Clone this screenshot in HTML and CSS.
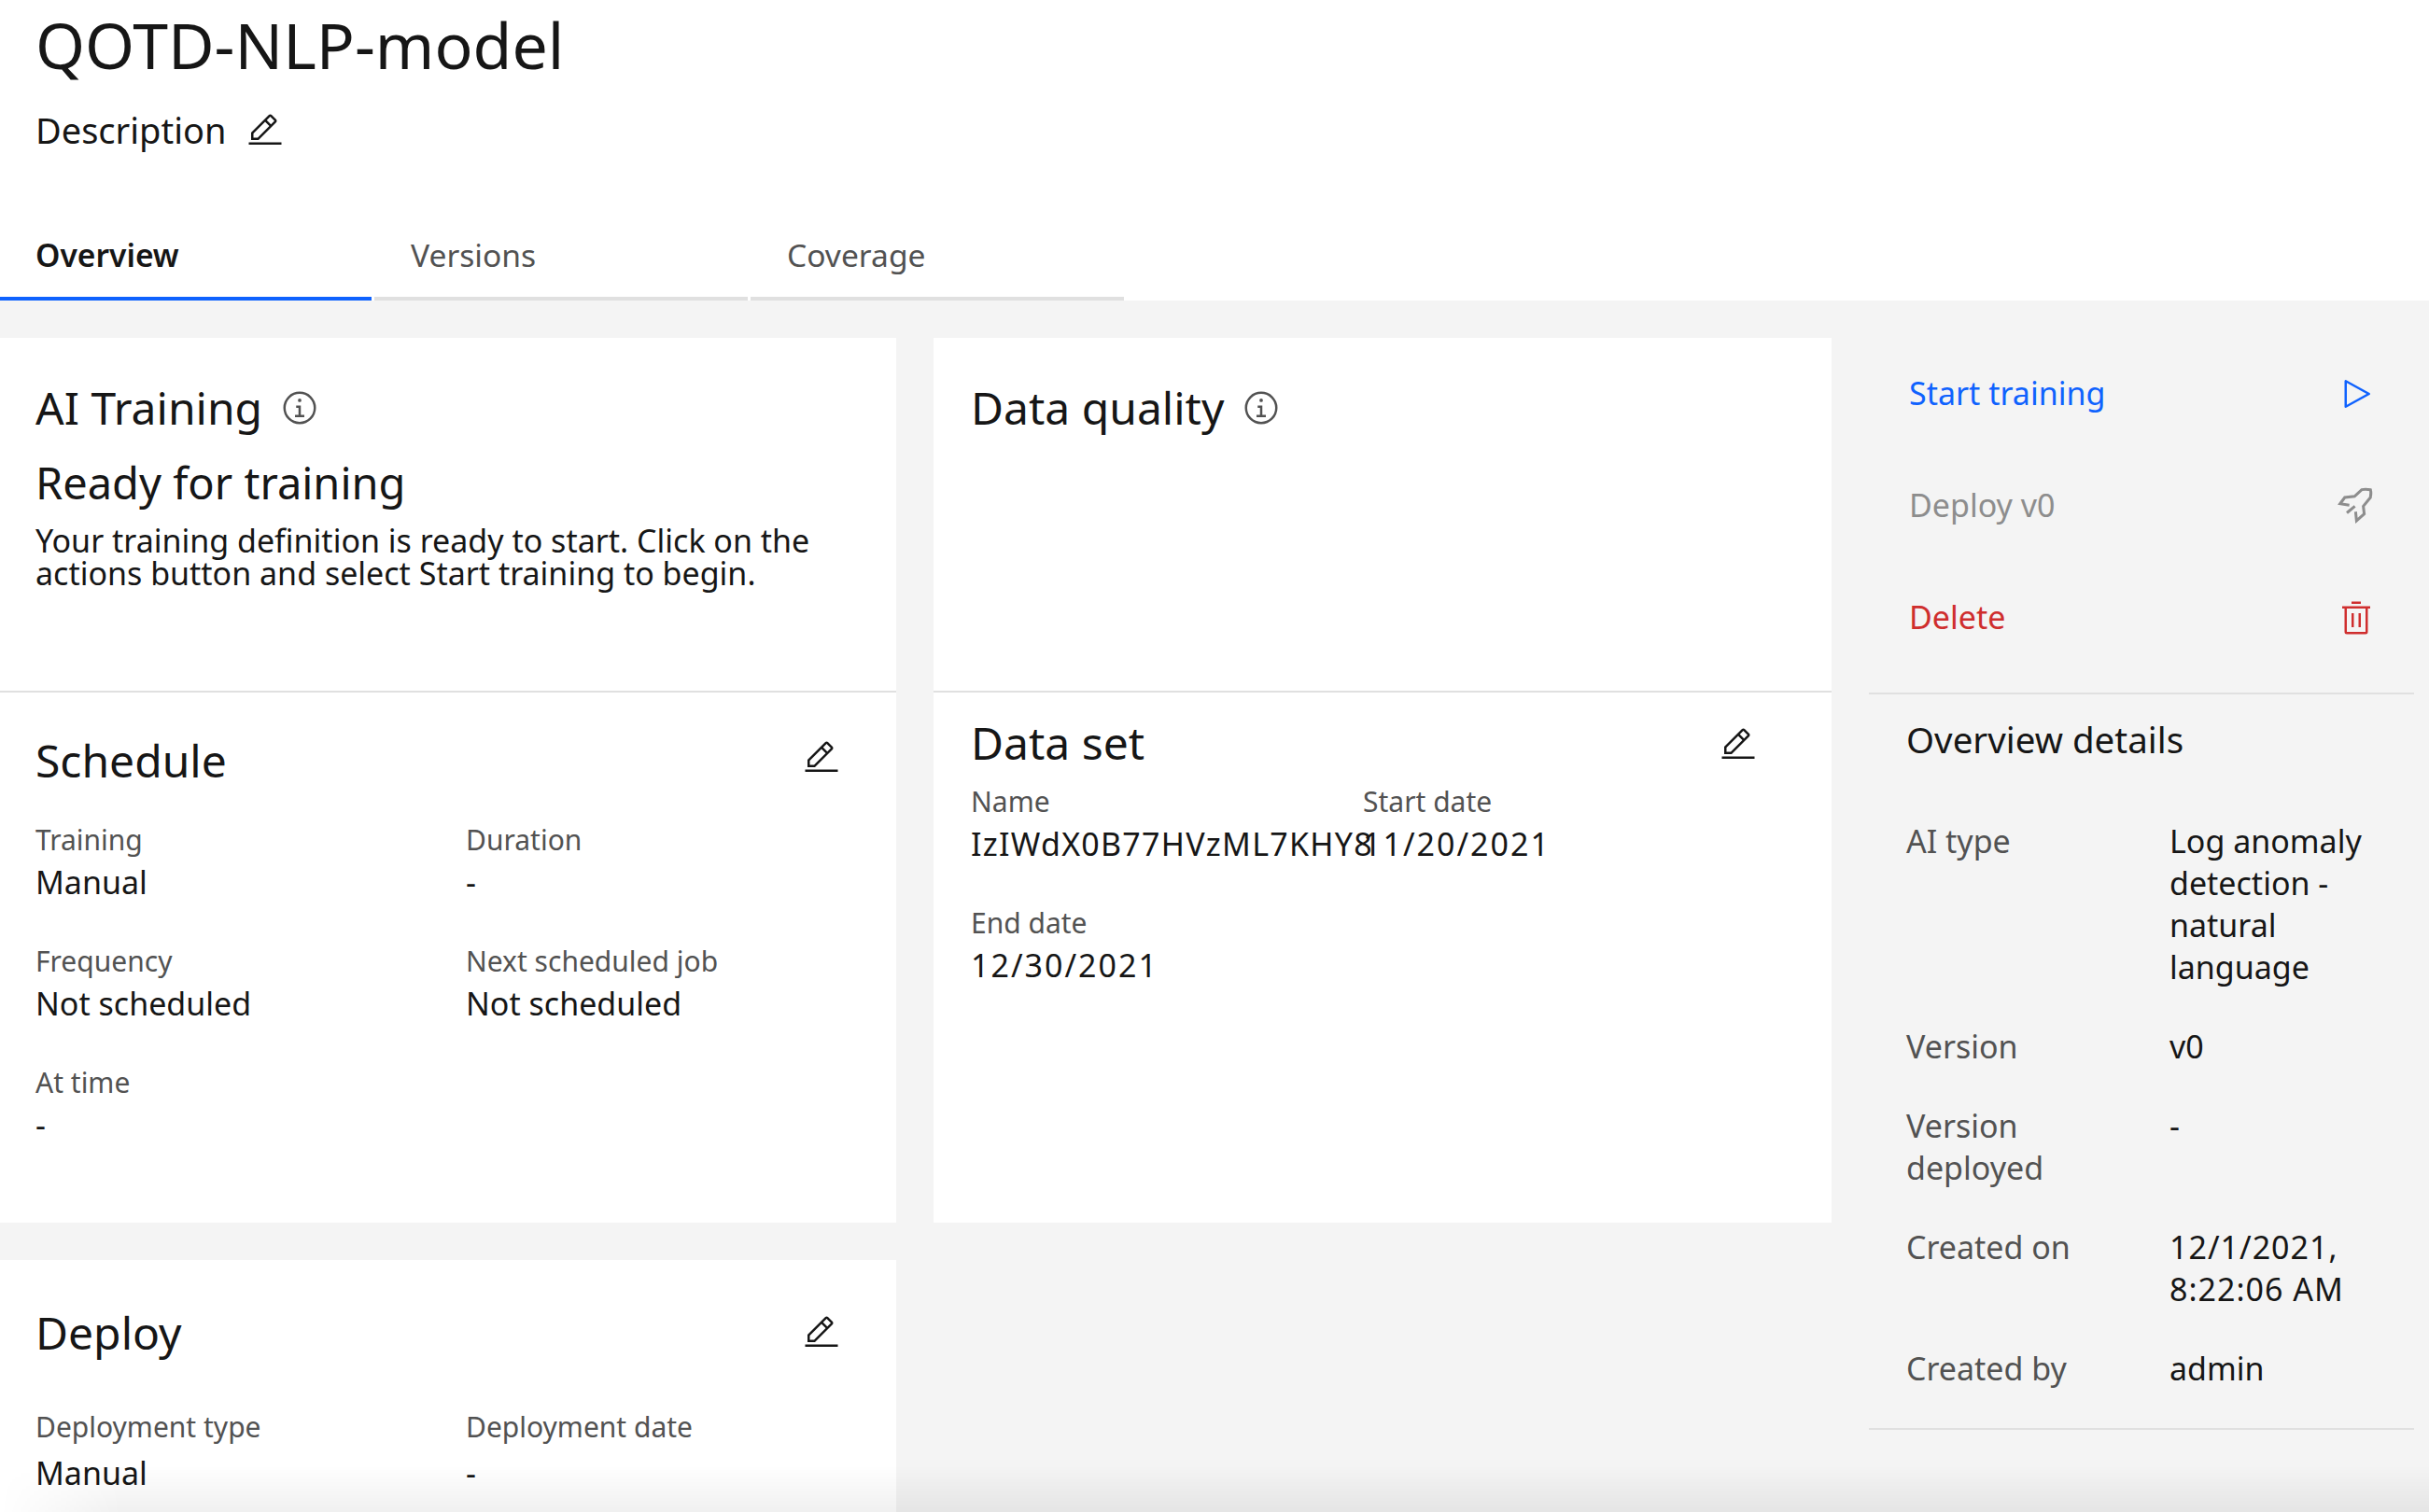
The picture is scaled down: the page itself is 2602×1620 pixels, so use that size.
FILE: index.html
```html
<!DOCTYPE html>
<html lang="en">
<head>
    <meta charset="UTF-8">
    <title>QOTD-NLP-model</title>
    <link rel="stylesheet" href="styles.css">
</head>
<body>
    <svg class="icon-defs" width="0" height="0">
        <symbol id="edit" viewBox="0 0 32 32"><path d="M2 26h28v2H2zM25.4 9c.8-.8.8-2 0-2.8l-3.6-3.6c-.8-.8-2-.8-2.8 0l-15 15V24h6.4l15-15zm-5-5L24 7.6l-3 3L17.4 7l3-3zM6 22v-3.6l10-10 3.6 3.6-10 10H6z"/></symbol>
        <symbol id="info" viewBox="0 0 32 32"><path d="M17 22v-8h-4v2h2v6h-3v2h8v-2h-3zM16 8a1.5 1.5 0 1 0 1.5 1.5A1.5 1.5 0 0 0 16 8z"/><path d="M16 30a14 14 0 1 1 14-14 14 14 0 0 1-14 14zm0-26a12 12 0 1 0 12 12A12 12 0 0 0 16 4z"/></symbol>
    </svg>

    <header class="page-header">
        <h1 class="page-title">QOTD-NLP-model</h1>
        <div class="description">
            <span>Description</span>
            <svg class="icon icon-edit-small"><use href="#edit"/></svg>
        </div>
        <nav class="tabs">
            <a class="tab tab-active">Overview</a>
            <a class="tab">Versions</a>
            <a class="tab">Coverage</a>
        </nav>
    </header>

    <main class="content">
        <div class="column">
            <div class="card">
                <section class="card-top">
                    <h2 class="heading">AI Training <svg class="icon icon-info"><use href="#info"/></svg></h2>
                    <h3 class="subheading">Ready for training</h3>
                    <p class="intro">Your training definition is ready to start. Click on the actions button and select Start training to begin.</p>
                </section>
                <section class="card-schedule">
                    <div class="section-head">
                        <h2 class="heading">Schedule</h2>
                        <svg class="icon icon-edit icon-edit-raised"><use href="#edit"/></svg>
                    </div>
                    <div class="fields">
                        <div class="field"><div class="label">Training</div><div class="value">Manual</div></div>
                        <div class="field"><div class="label">Duration</div><div class="value">-</div></div>
                        <div class="field"><div class="label">Frequency</div><div class="value">Not scheduled</div></div>
                        <div class="field"><div class="label">Next scheduled job</div><div class="value">Not scheduled</div></div>
                        <div class="field"><div class="label">At time</div><div class="value">-</div></div>
                    </div>
                </section>
            </div>
            <div class="card card-deploy">
                <div class="section-head">
                    <h2 class="heading">Deploy</h2>
                    <svg class="icon icon-edit"><use href="#edit"/></svg>
                </div>
                <div class="fields">
                    <div class="field"><div class="label">Deployment type</div><div class="value">Manual</div></div>
                    <div class="field"><div class="label">Deployment date</div><div class="value">-</div></div>
                </div>
            </div>
        </div>

        <div class="column">
            <div class="card">
                <section class="card-top card-top-wide">
                    <h2 class="heading">Data quality <svg class="icon icon-info"><use href="#info"/></svg></h2>
                </section>
                <section class="card-dataset">
                    <div class="section-head section-head-tight">
                        <h2 class="heading">Data set</h2>
                        <svg class="icon icon-edit icon-edit-lowered"><use href="#edit"/></svg>
                    </div>
                    <div class="dataset-fields">
                        <div class="field"><div class="label">Name</div><div class="value value-id">IzIWdX0B77HVzML7KHY8</div></div>
                        <div class="field"><div class="label">Start date</div><div class="value value-date">11/20/2021</div></div>
                        <div class="field"><div class="label">End date</div><div class="value value-date">12/30/2021</div></div>
                    </div>
                </section>
            </div>
        </div>

        <aside class="sidebar">
            <div class="actions">
                <a class="action action-primary">
                    <span>Start training</span>
                    <svg class="icon icon-action" viewBox="0 0 32 32"><path d="M7 28a1 1 0 0 1-1-1V5a1 1 0 0 1 1.482-.876l20 11a1 1 0 0 1 0 1.752l-20 11A1 1 0 0 1 7 28zM8 6.69v18.62L24.925 16z"/></svg>
                </a>
                <a class="action action-disabled">
                    <span>Deploy v0</span>
                    <svg class="icon icon-action" viewBox="0 0 32 32"><path class="rocket" d="M15.500 21 16.300 28.800 22.900 23 22.100 16.300 28.200 8.800Q29 5 28.300 2.200 24 1.500 20.800 2.100L14.600 7.800 6.200 8.800 2.200 14.200 10.100 15.400M8 22 14.900 16.300"/></svg>
                </a>
                <a class="action action-danger">
                    <span>Delete</span>
                    <svg class="icon icon-action" viewBox="0 0 32 32"><path d="M12 12h2v12h-2zM18 12h2v12h-2z"/><path d="M4 6v2h2v20a2 2 0 0 0 2 2h16a2 2 0 0 0 2-2V8h2V6zm4 22V8h16v20zM12 2h8v2h-8z"/></svg>
                </a>
            </div>
            <div class="details">
                <h3 class="details-title">Overview details</h3>
                <dl class="details-list">
                    <dt>AI type</dt><dd>Log anomaly detection - natural language</dd>
                    <dt>Version</dt><dd>v0</dd>
                    <dt>Version deployed</dt><dd>-</dd>
                    <dt>Created on</dt><dd class="details-date">12/1/2021, 8:22:06 AM</dd>
                    <dt>Created by</dt><dd>admin</dd>
                </dl>
            </div>
        </aside>
    </main>

    <div class="bottom-fade"></div>
</body>
</html>
```

FILE: styles.css
```css
* {
    box-sizing: border-box;
}
html, body {
    margin: 0;
    height: 1620px;
    overflow: hidden;
}
body {
    position: relative;
    width: 2602px;
    background-color: #f4f4f4;
    color: #161616;
    font-family: "Noto Sans", sans-serif;
    font-size: 26px;
    line-height: 45px;
}
h1, h2, h3, p, dl, dd {
    margin: 0;
    font-weight: 400;
}
.icon-defs {
    position: absolute;
}
.icon {
    fill: currentColor;
    flex: none;
}
.page-header {
    height: 322px;
    background-color: #fff;
    padding-left: 38px;
    position: relative;
}
.page-title {
    font-size: 68px;
    line-height: 96px;
}
.description {
    display: flex;
    align-items: center;
    gap: 22px;
    font-size: 38px;
    line-height: 50px;
    margin-top: 18px;
}
.icon-edit-small {
    width: 40px;
    height: 40px;
    margin-top: 2px;
}
.tabs {
    position: absolute;
    left: 0;
    bottom: 0;
    display: flex;
    gap: 3px;
}
.tab {
    width: 400px;
    height: 80px;
    padding-left: 39px;
    padding-top: 9px;
    border-bottom: 4px solid #e0e0e0;
    color: #525252;
    font-size: 33.600px;
}
.tab-active {
    width: 398px;
    padding-left: 38px;
    border-bottom-color: #0f62fe;
    color: #161616;
    font-weight: 600;
}
.content {
    display: grid;
    grid-template-columns: 960px 962px 584px;
    column-gap: 40px;
    padding-top: 40px;
}
.column {
    display: flex;
    flex-direction: column;
    gap: 40px;
}
.card {
    background-color: #fff;
}
.card-top {
    height: 380px;
    padding: 40px 38px 0;
    border-bottom: 2px solid #e0e0e0;
}
.card-top-wide {
    padding-left: 40px;
}
.heading {
    font-size: 48px;
    line-height: 70px;
}
.icon-info {
    width: 40px;
    height: 40px;
    margin-left: 7px;
    color: #525252;
    vertical-align: -2px;
}
.subheading {
    font-size: 47px;
    line-height: 70px;
    margin-top: 10px;
}
.intro {
    font-size: 34px;
    line-height: 35px;
    margin-top: 10px;
    width: 880px;
}
.card-schedule {
    height: 568px;
    padding: 38px 38px 0;
}
.section-head {
    display: flex;
    justify-content: space-between;
    align-items: center;
    padding-right: 22px;
}
.icon-edit {
    width: 40px;
    height: 40px;
}
.icon-edit-raised {
    margin-bottom: 6px;
}
.icon-edit-lowered {
    margin-top: 4px;
}
.fields {
    display: grid;
    grid-template-columns: 461px 1fr;
    row-gap: 39px;
    margin-top: 27px;
}
.label {
    color: #525252;
    font-size: 30px;
    margin-bottom: 1px;
}
.value {
    font-size: 34px;
}
.card-deploy {
    padding: 43px 38px 0;
    height: 320px;
}
.card-deploy .fields {
    margin-top: 43px;
}
.card-deploy .label {
    margin-bottom: 5px;
}
.card-dataset {
    height: 568px;
    padding: 19px 40px 0;
}
.section-head-tight {
    padding-right: 40px;
}
.dataset-fields {
    display: grid;
    grid-template-columns: 420px 1fr;
    row-gap: 39px;
    margin-top: 5px;
}
.value-id {
    white-space: nowrap;
    letter-spacing: 1.250px;
}
.value-date {
    letter-spacing: 2px;
}
.action {
    height: 120px;
    display: flex;
    align-items: center;
    justify-content: space-between;
    padding: 0 42px 0 43px;
    font-size: 34px;
}
.action span {
    padding-bottom: 2px;
}
.action-primary {
    color: #0f62fe;
}
.action-disabled {
    color: #8d8d8d;
}
.action-danger {
    color: #cf2e2e;
}
.icon-action {
    width: 40px;
    height: 40px;
}
.rocket {
    fill: none;
    stroke: currentColor;
    stroke-width: 2.400;
}
.actions {
    height: 382px;
    border-bottom: 2px solid #e0e0e0;
}
.details {
    padding: 20px 0 22px 40px;
    border-bottom: 2px solid #e0e0e0;
    height: 788px;
}
.details-title {
    font-size: 38.500px;
    line-height: 56px;
}
.details-list {
    display: grid;
    grid-template-columns: 282px 1fr;
    row-gap: 40px;
    margin-top: 59px;
    font-size: 34px;
}
.details-list dt {
    color: #525252;
    padding-right: 20px;
}
.details-date {
    letter-spacing: 1px;
}
.bottom-fade {
    position: absolute;
    left: 0;
    right: 0;
    bottom: 0;
    height: 50px;
    background: linear-gradient(to bottom, rgba(0, 0, 0, 0), rgba(0, 0, 0, 0.06));
    -webkit-mask-image: linear-gradient(to right, transparent, #000 130px);
    mask-image: linear-gradient(to right, transparent, #000 130px);
}
```
